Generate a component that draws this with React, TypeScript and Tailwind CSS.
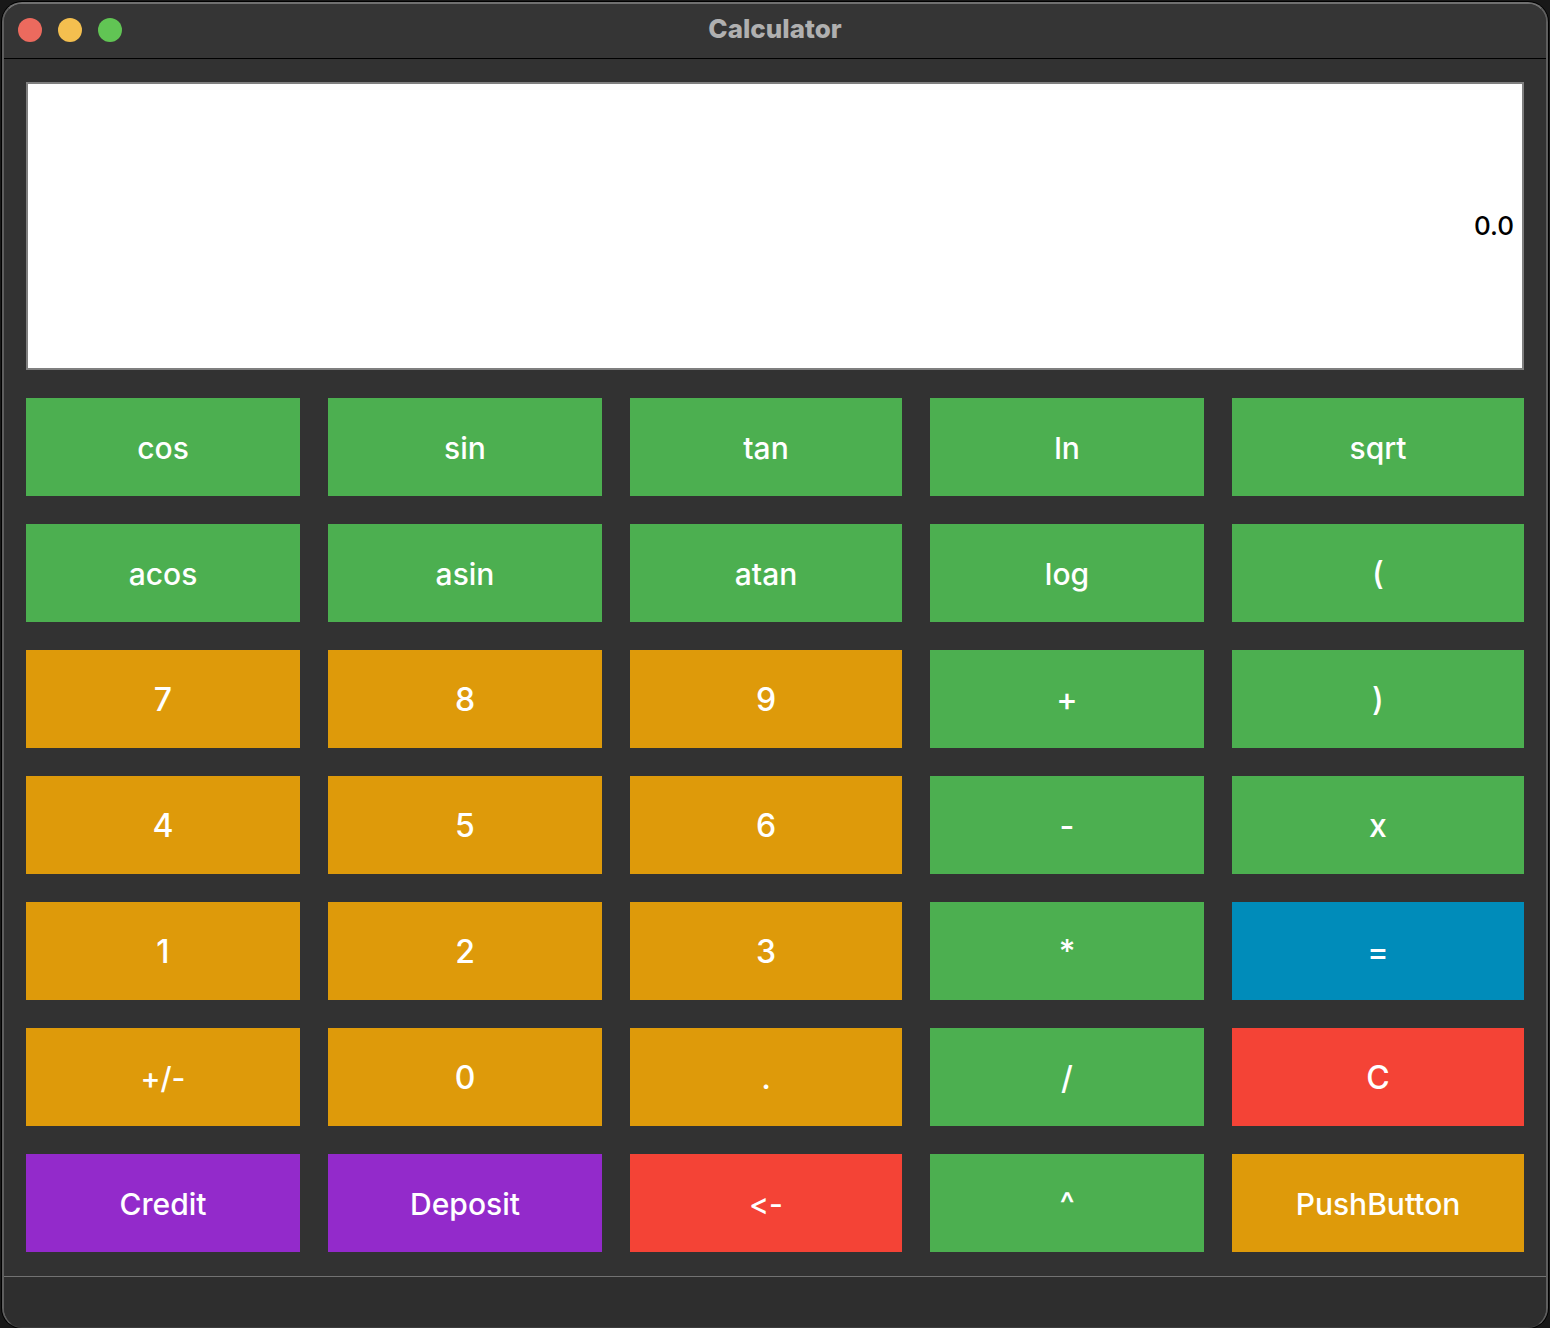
import { useState } from "react";

type Key = { label: string; tone: string };

const GREEN = "bg-[#4caf50]";
const ORANGE = "bg-[#de9a0a]";
const PURPLE = "bg-[#932acb]";
const RED = "bg-[#f44336]";
const BLUE = "bg-[#008cba]";

const keys: Key[] = [
  { label: "cos", tone: GREEN },
  { label: "sin", tone: GREEN },
  { label: "tan", tone: GREEN },
  { label: "ln", tone: GREEN },
  { label: "sqrt", tone: GREEN },
  { label: "acos", tone: GREEN },
  { label: "asin", tone: GREEN },
  { label: "atan", tone: GREEN },
  { label: "log", tone: GREEN },
  { label: "(", tone: GREEN },
  { label: "7", tone: ORANGE },
  { label: "8", tone: ORANGE },
  { label: "9", tone: ORANGE },
  { label: "+", tone: GREEN },
  { label: ")", tone: GREEN },
  { label: "4", tone: ORANGE },
  { label: "5", tone: ORANGE },
  { label: "6", tone: ORANGE },
  { label: "-", tone: GREEN },
  { label: "x", tone: GREEN },
  { label: "1", tone: ORANGE },
  { label: "2", tone: ORANGE },
  { label: "3", tone: ORANGE },
  { label: "*", tone: GREEN },
  { label: "=", tone: BLUE },
  { label: "+/-", tone: ORANGE },
  { label: "0", tone: ORANGE },
  { label: ".", tone: ORANGE },
  { label: "/", tone: GREEN },
  { label: "C", tone: RED },
  { label: "Credit", tone: PURPLE },
  { label: "Deposit", tone: PURPLE },
  { label: "<-", tone: RED },
  { label: "^", tone: GREEN },
  { label: "PushButton", tone: ORANGE },
];

function TitleBar() {
  return (
    <header className="grid h-[55px] grid-cols-[1fr_auto_1fr] items-center border-b border-black bg-[#353535] px-3.5 pb-1">
      <div className="flex gap-4 pt-0.5">
        <button type="button" aria-label="Close" className="size-6 rounded-full bg-[#ec6a5e]" />
        <button type="button" aria-label="Minimize" className="size-6 rounded-full bg-[#f4bf4f]" />
        <button type="button" aria-label="Zoom" className="size-6 rounded-full bg-[#61c554]" />
      </div>
      <h1 className="text-[26px] leading-8 font-extrabold text-[#b0b0b0]">Calculator</h1>
    </header>
  );
}

export default function App() {
  const [value, setValue] = useState("0.0");

  return (
    <div className="min-h-screen bg-[#181818] px-0.5 pt-0.5 font-['Inter','Liberation_Sans',sans-serif]">
      <div className="flex min-h-[calc(100vh-2px)] flex-col overflow-hidden rounded-[20px] border-2 border-b border-[#5e5e5e] border-t-[#707070] border-b-[#3c3c3c] bg-[#323232] shadow-[0_0_0_1px_#000000]">
        <TitleBar />
        <main className="flex flex-col gap-7 px-[22px] pt-[23px] pb-6">
          <input
            aria-label="Result"
            value={value}
            onChange={(e) => setValue(e.target.value)}
            className="h-72 w-full border-2 border-[#7f7f7f] bg-white px-2 pb-0.5 text-right text-[26px] font-medium text-black outline-none"
          />
          <div className="grid grid-cols-[274fr_274fr_272fr_274fr_292fr] gap-7">
            {keys.map((key) => (
              <button
                key={key.label}
                type="button"
                className={`h-[98px] pt-0.5 leading-10 font-medium text-white [font-feature-settings:'calt'_0] ${
                  key.label.length > 1 ? "text-[30px]" : "text-[32px]"
                } ${key.tone}`}
              >
                {key.label}
              </button>
            ))}
          </div>
        </main>
        <footer className="grow border-t border-[#727272] bg-[#2e2e2e]" />
      </div>
    </div>
  );
}
